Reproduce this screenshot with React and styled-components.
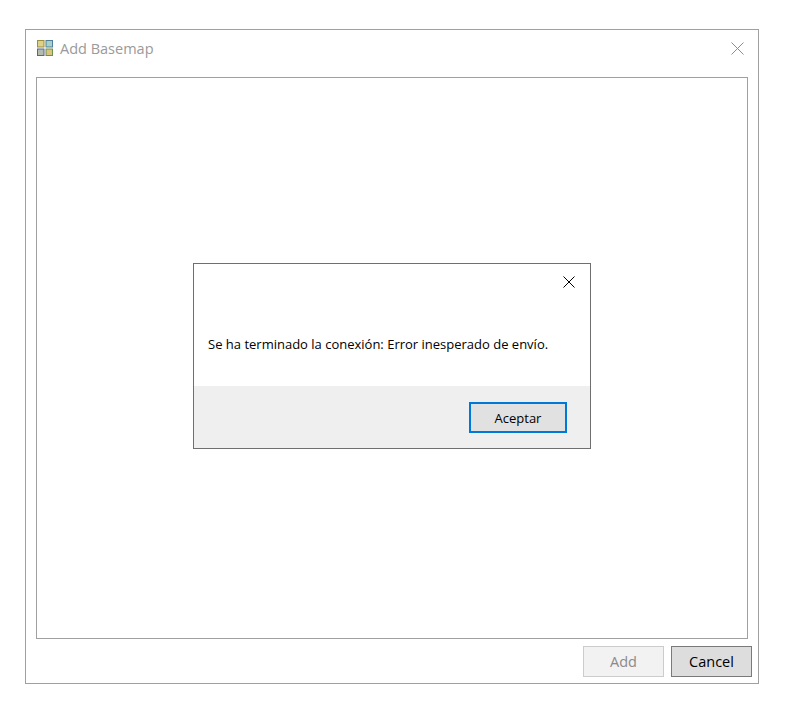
import React from "react";
import styled, { createGlobalStyle } from "styled-components";

const GlobalStyle = createGlobalStyle`
  html, body {
    margin: 0;
    background: #ffffff;
    font-family: "Open Sans", "Noto Sans", sans-serif;
  }
`;

const Page = styled.div`
  position: relative;
  width: 790px;
  height: 707px;
  overflow: hidden;
  padding: 29px 0 0 25px;
  box-sizing: border-box;
`;

const Window = styled.div`
  width: 734px;
  height: 655px;
  box-sizing: border-box;
  border: 1px solid #a0a0a0;
  display: flex;
  flex-direction: column;
  padding: 0 6px 6px 10px;
`;

const TitleBar = styled.div`
  height: 47px;
  flex: none;
  display: flex;
  align-items: center;
  gap: 7px;
  padding: 0 8px 11px 1px;
  box-sizing: border-box;
`;

const Title = styled.span`
  flex: 1;
  font-size: 14.5px;
  color: #9a9a9a;
`;

const ContentPanel = styled.div`
  width: 712px;
  height: 562px;
  flex: none;
  box-sizing: border-box;
  border: 1px solid #a0a0a0;
`;

const ButtonRow = styled.div`
  display: flex;
  justify-content: flex-end;
  gap: 7px;
  margin-top: 7px;
`;

const WindowButton = styled.button`
  width: 81px;
  height: 31px;
  box-sizing: border-box;
  padding: 0;
  font-family: inherit;
  font-size: 14.5px;
  border: 1px solid ${({ disabled }) => (disabled ? "#cccccc" : "#7a7a7a")};
  background: ${({ disabled }) => (disabled ? "#f2f2f2" : "#dddddd")};
  color: ${({ disabled }) => (disabled ? "#8a8a8a" : "#000000")};
`;

const Modal = styled.div`
  position: absolute;
  left: 193px;
  top: 263px;
  width: 398px;
  height: 186px;
  box-sizing: border-box;
  border: 1px solid #6f6f6f;
  background: #ffffff;
  display: flex;
  flex-direction: column;
`;

const ModalClose = styled.div`
  height: 36px;
  flex: none;
  display: flex;
  justify-content: flex-end;
  align-items: center;
  padding: 0 15px 0 0;
`;

const ModalBody = styled.div`
  flex: 1;
  padding: 35px 0 0 14px;
  box-sizing: border-box;
  font-size: 13px;
  line-height: 18px;
  color: #000000;
`;

const ModalFooter = styled.div`
  height: 62px;
  flex: none;
  background: #efefef;
  display: flex;
  justify-content: flex-end;
  padding: 16px 23px 0 0;
  box-sizing: border-box;
`;

const ModalButton = styled.button`
  width: 98px;
  height: 31px;
  box-sizing: border-box;
  padding: 0;
  font-family: inherit;
  font-size: 13px;
  color: #000000;
  background: #e1e1e1;
  border: 2px solid #0078d7;
`;

function BasemapIcon() {
  return (
    <svg width="16" height="16" viewBox="0 0 16 16">
      <rect x="0.5" y="0.5" width="6.5" height="6.5" fill="#dcd28c" stroke="#9c8f3c" />
      <rect x="9" y="0.5" width="6.5" height="6.5" fill="#a8d0c8" stroke="#4f7f9c" />
      <rect x="0.5" y="9" width="6.5" height="6.5" fill="#b4bcb0" stroke="#54688c" />
      <rect x="9" y="9" width="6.5" height="6.5" fill="#d8c47c" stroke="#6f9050" />
    </svg>
  );
}

function CloseIcon({ size, color }) {
  return (
    <svg width={size} height={size} viewBox={`0 0 ${size} ${size}`}>
      <path d={`M0.5 0.5L${size - 0.5} ${size - 0.5}M${size - 0.5} 0.5L0.5 ${size - 0.5}`} stroke={color} strokeWidth="1" fill="none" />
    </svg>
  );
}

function App() {
  return (
    <Page>
      <GlobalStyle />
      <Window>
        <TitleBar>
          <BasemapIcon />
          <Title>Add Basemap</Title>
          <CloseIcon size={13} color="#8c8c8c" />
        </TitleBar>
        <ContentPanel />
        <ButtonRow>
          <WindowButton disabled>Add</WindowButton>
          <WindowButton>Cancel</WindowButton>
        </ButtonRow>
      </Window>
      <Modal>
        <ModalClose>
          <CloseIcon size={12} color="#000000" />
        </ModalClose>
        <ModalBody>Se ha terminado la conexión: Error inesperado de envío.</ModalBody>
        <ModalFooter>
          <ModalButton>Aceptar</ModalButton>
        </ModalFooter>
      </Modal>
    </Page>
  );
}

export default App;
